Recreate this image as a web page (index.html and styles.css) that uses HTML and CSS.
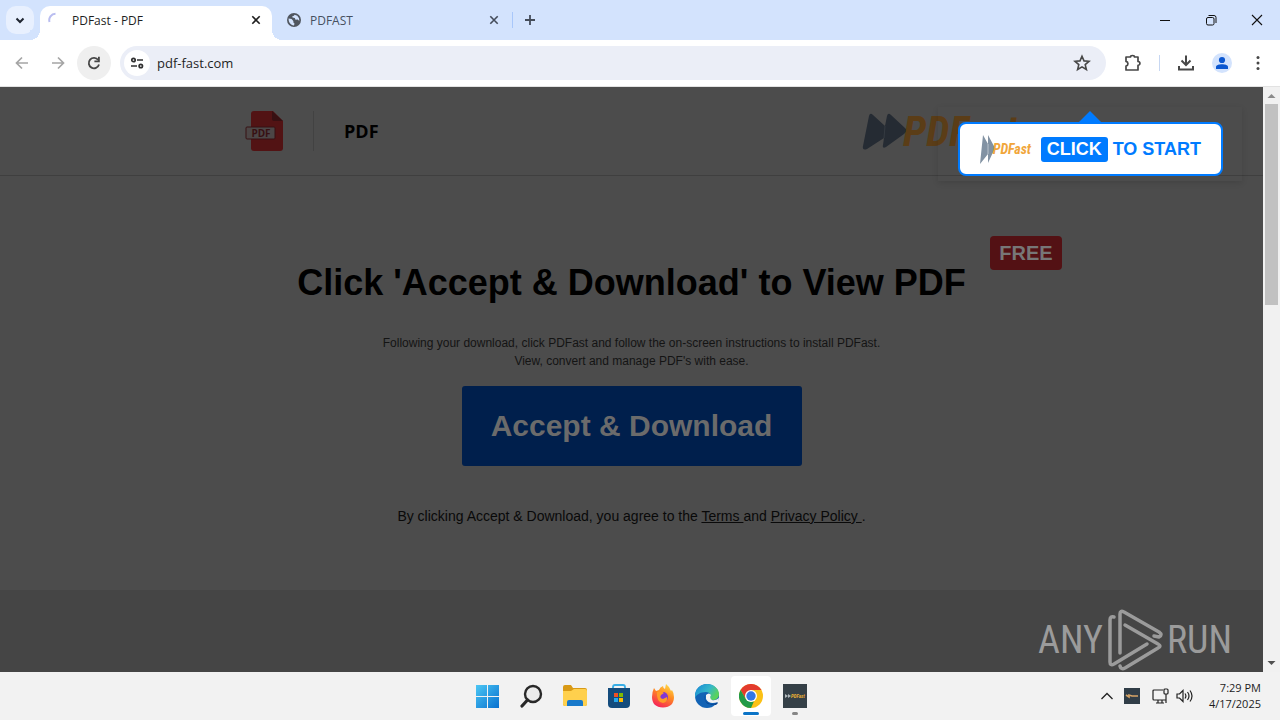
FILE: index.html
```html
<!DOCTYPE html>
<html lang="en">
<head>
<meta charset="utf-8">
<title>PDFast - PDF</title>
<link rel="stylesheet" href="styles.css">
</head>
<body>
<div class="tabstrip">
  <button class="tab-search" aria-label="Search tabs"><svg width="20" height="20" viewBox="0 0 20 20"><path d="M6.500 8.500l3.500 3.500 3.500-3.500" fill="none" stroke="#1f2530" stroke-width="2"/></svg></button>
  <div class="tab tab-active">
    <svg class="tab-icon" width="16" height="16" viewBox="0 0 16 16"><path d="M1.500 10a6.500 6.500 0 0 1 6-8.300" fill="none" stroke="#b9bdf0" stroke-width="2"/></svg>
    <span class="tab-title">PDFast - PDF</span>
    <button class="tab-close" aria-label="Close tab"><svg width="10" height="10" viewBox="0 0 10 10"><path d="M1.300 1.300l7.400 7.400M8.700 1.300l-7.400 7.400" stroke="#1f1f1f" stroke-width="1.600"/></svg></button>
  </div>
  <div class="tab tab-idle">
    <svg class="tab-icon" width="16" height="16" viewBox="0 0 16 16"><circle cx="8" cy="8" r="7" fill="#50565f"/><path d="M2.600 6.500l3 .5 1.700 2 .2 1.700 1 .7-.5 2C4.500 13 2.500 10.500 2.600 6.500zM8.500 2.700l2.800 1 1.700 2.500.3 2.800-1.600-1.500-2.200.2-.7-1.700-2.300-.6-.2-1.200 1.700-.4z" fill="#d3e3fd"/></svg>
    <span class="tab-title">PDFAST</span>
    <button class="tab-close" aria-label="Close tab"><svg width="10" height="10" viewBox="0 0 10 10"><path d="M1.300 1.300l7.400 7.400M8.700 1.300l-7.400 7.400" stroke="#444c5a" stroke-width="1.600"/></svg></button>
  </div>
  <span class="tab-divider"></span>
  <button class="new-tab" aria-label="New tab"><svg width="12" height="12" viewBox="0 0 12 12"><path d="M6 1v10M1 6h10" stroke="#444c5a" stroke-width="1.800"/></svg></button>
  <div class="window-controls">
    <button aria-label="Minimize"><svg width="12" height="12" viewBox="0 0 12 12"><path d="M1 6.500h10" stroke="#111"/></svg></button>
    <button aria-label="Restore"><svg width="12" height="12" viewBox="0 0 12 12"><rect x="1.500" y="3.500" width="7.500" height="7.500" rx="1.500" fill="none" stroke="#111"/><path d="M3.500 1.500h5.500a2 2 0 0 1 2 2v5.500" fill="none" stroke="#111"/></svg></button>
    <button aria-label="Close"><svg width="12" height="12" viewBox="0 0 12 12"><path d="M1 1l10 10M11 1L1 11" stroke="#111" stroke-width="1.100"/></svg></button>
  </div>
</div>

<div class="toolbar">
  <button class="nav-button" aria-label="Back"><svg width="16" height="16" viewBox="0 0 16 16"><path d="M14 8H3M8 2.500L2.500 8 8 13.500" fill="none" stroke="#a5a5a5" stroke-width="1.700"/></svg></button>
  <button class="nav-button" aria-label="Forward"><svg width="16" height="16" viewBox="0 0 16 16"><path d="M2 8h11M8 2.500L13.500 8 8 13.500" fill="none" stroke="#a5a5a5" stroke-width="1.700"/></svg></button>
  <button class="nav-button nav-reload" aria-label="Reload"><svg width="16" height="16" viewBox="0 0 16 16"><path d="M13 9.500A5.200 5.200 0 1 1 12.200 5" fill="none" stroke="#474747" stroke-width="1.800"/><path d="M13.800 1.800v5.400H8.400V5.500H12V1.800z" fill="#474747"/></svg></button>
  <div class="address-bar">
    <button class="site-info" aria-label="Site information"><svg width="16" height="16" viewBox="0 0 16 16"><g fill="none" stroke="#303030" stroke-width="1.700"><circle cx="4.500" cy="5" r="1.700"/><path d="M8 5h6M2 11h6"/><circle cx="11.800" cy="11" r="1.700"/></g></svg></button>
    <input class="address" type="text" aria-label="Address" value="pdf-fast.com">
    <button class="bookmark" aria-label="Bookmark this page"><svg width="18" height="18" viewBox="0 0 18 18"><path d="M9 2.300l2 4.600 5 .4-3.800 3.300 1.200 4.900L9 12.900l-4.400 2.600 1.200-4.900L2 7.300l5-.4z" fill="none" stroke="#474747" stroke-width="1.600"/></svg></button>
  </div>
  <div class="toolbar-actions">
    <button aria-label="Extensions"><svg width="20" height="20" viewBox="0 0 20 20"><path d="M3 4h4.500a2 1.500 0 0 1 4 0H15v4.500a1.800 1.800 0 0 1 0 3.800V17H3v-4c2.600-.6 2.600-4 0-4.600z" fill="none" stroke="#474747" stroke-width="1.700" stroke-linejoin="round"/></svg></button>
    <span class="toolbar-divider"></span>
    <button aria-label="Downloads"><svg width="20" height="20" viewBox="0 0 20 20"><path d="M10 2.500v9M5.500 7.500l4.500 4.500 4.500-4.500M3 13v3.500h14V13" fill="none" stroke="#474747" stroke-width="2"/></svg></button>
    <button aria-label="Profile"><svg width="20" height="20" viewBox="0 0 20 20"><circle cx="10" cy="10" r="10" fill="#d3e3fd"/><circle cx="10" cy="7" r="3.100" fill="#0b57d0"/><path d="M4 16v-2c0-2 3-2.800 6-2.800s6 .8 6 2.800v2z" fill="#0b57d0"/></svg></button>
    <button aria-label="Menu"><svg width="20" height="20" viewBox="0 0 20 20"><g fill="#474747"><circle cx="10" cy="4.500" r="1.500"/><circle cx="10" cy="10" r="1.500"/><circle cx="10" cy="15.500" r="1.500"/></g></svg></button>
  </div>
</div>

<div class="viewport">
  <div class="page">
    <header class="site-header">
      <div class="header-inner">
        <svg class="pdf-icon" width="39" height="42" viewBox="0 0 39 42" role="img" aria-label="PDF file"><path d="M9 1h19l10 10v27a3 3 0 0 1-3 3H9a3 3 0 0 1-3-3V4a3 3 0 0 1 3-3z" fill="#521314"/><path d="M27 1l11 10H29a2 2 0 0 1-2-2z" fill="#371012"/><rect x="1" y="17" width="29" height="12" rx="1" fill="#4c4646" stroke="#371012"/><text class="pdf-icon-text" x="16" y="27" text-anchor="middle">PDF</text></svg>
        <span class="product-name">PDF</span>
        <div class="logo logo-large">
          <svg width="46" height="38" viewBox="0 0 46 38"><path d="M7 4Q8 0 11 3L23 14 25 4Q26 0 29 3L43 16Q46 19 42 22L24 35Q20 37 21 33L22 26 5 37Q0 39 1 34z" fill="#252b33"/><path d="M23 14l-1 12" stroke="#343a41"/></svg>
          <span>PDFast</span>
        </div>
      </div>
    </header>
    <main class="hero">
      <div class="hero-inner">
        <span class="free-badge">FREE</span>
        <h1>Click 'Accept &amp; Download' to View PDF</h1>
        <p class="instructions">Following your download, click PDFast and follow the on-screen instructions to install PDFast.<br>View, convert and manage PDF's with ease.</p>
        <button class="download">Accept &amp; Download</button>
        <p class="terms">By clicking Accept &amp; Download, you agree to the <a href="#">Terms </a>and <a href="#">Privacy Policy </a>.</p>
      </div>
    </main>
    <footer class="site-footer"></footer>
  </div>
  <div class="scrollbar" aria-hidden="true">
    <svg width="17" height="17" viewBox="0 0 17 17"><path d="M4.500 11L8.500 7l4 4z" fill="#8b8b8b"/></svg>
    <div class="scroll-thumb"></div>
    <svg class="scroll-down" width="17" height="17" viewBox="0 0 17 17"><path d="M4.500 6L8.500 10l4-4z" fill="#505050"/></svg>
  </div>
  <div class="prompt-shade"></div>
  <div class="prompt">
    <div class="logo logo-small">
      <svg width="15" height="30" viewBox="0 0 15 30"><path d="M3 1L8 10V1l7 13-7 15v-9L0 30z" fill="#8292a3"/><path d="M8 10v10" stroke="#b9c3cc"/></svg>
      <span>PDFast</span>
    </div>
    <span class="prompt-click">CLICK</span>
    <span class="prompt-text">TO START</span>
  </div>
  <div class="watermark">
    <span>ANY</span>
    <svg width="56" height="64" viewBox="0 0 56 64"><g fill="none" stroke="#9b9b9b" stroke-width="3.500" stroke-linejoin="round" stroke-linecap="round"><path d="M7 9Q3 8 3 12V54Q3 58 7 56L40 36"/><path d="M13 45V6Q13 2 17 4L52 24Q56 27 52 29L47 28"/><path d="M18 17L51 36Q55 38 51 40L18 60Q14 62 13 58"/></g></svg>
    <span>RUN</span>
  </div>
</div>

<div class="taskbar">
  <nav class="apps" aria-label="Taskbar">
    <button aria-label="Start"><svg width="24" height="24" viewBox="0 0 24 24"><defs><linearGradient id="win" x1="0" y1="0" x2="1" y2="1"><stop offset="0" stop-color="#4cc7f4"/><stop offset="1" stop-color="#0870cf"/></linearGradient></defs><path d="M1 1h11v11H1zM13 1h11v11H13zM1 13h11v11H1zM13 13h11v11H13z" fill="url(#win)"/></svg></button>
    <button aria-label="Search"><svg width="24" height="24" viewBox="0 0 24 24"><circle cx="14" cy="10" r="8" fill="#ececec" stroke="#292929" stroke-width="2.400"/><path d="M8.500 16L3 22" stroke="#292929" stroke-width="3.200" stroke-linecap="round"/></svg></button>
    <button aria-label="File Explorer"><svg width="26" height="24" viewBox="0 0 26 24"><path d="M1 3q0-2 2-2h6l2 3h12q2 0 2 2v14q0 2-2 2H3q-2 0-2-2z" fill="#d99a16"/><path d="M1 7h8l3-2h11q2 0 2 2v13q0 2-2 2H3q-2 0-2-2z" fill="#ffd04d"/><path d="M5 22v-4q0-2 2-2h12q2 0 2 2v4z" fill="#1879ca"/></svg></button>
    <button aria-label="Microsoft Store"><svg width="24" height="24" viewBox="0 0 24 24"><path d="M6 5V3q0-2 2-2h8q2 0 2 2v2" fill="none" stroke="#38aee6" stroke-width="1.800"/><path d="M1 4h22v16q0 4-4 4H5q-4 0-4-4z" fill="#144c7d"/><path d="M7 9h4v4H7z" fill="#f25022"/><path d="M12 9h4v4h-4z" fill="#7fba00"/><path d="M7 14h4v4H7z" fill="#26a8ec"/><path d="M12 14h4v4h-4z" fill="#ffb900"/></svg></button>
    <button aria-label="Firefox"><svg width="24" height="24" viewBox="0 0 24 24"><defs><linearGradient id="fox" x1=".8" y1="0" x2=".3" y2="1"><stop offset="0" stop-color="#ffe048"/><stop offset=".45" stop-color="#ff8a22"/><stop offset="1" stop-color="#f52259"/></linearGradient></defs><path d="M3 4l2 3 3-1q1-3 4-4 0 2 2 3l1-5q4 3 5 7l1-1q2 3 2 7 0 10-11 10.500Q1 23 1 13 1 8 3 4z" fill="url(#fox)"/><circle cx="12" cy="13" r="5" fill="#8137d5"/><path d="M6 8q4-2 7 1l-3 2q-2 3 2 4l4-2q1 5-4 6-7-1-6-11z" fill="#ff9b28"/></svg></button>
    <button aria-label="Microsoft Edge"><svg width="24" height="24" viewBox="0 0 24 24"><defs><linearGradient id="edge" x1="0" y1="0" x2="1" y2=".5"><stop offset="0" stop-color="#1588d9"/><stop offset=".6" stop-color="#35b7c9"/><stop offset="1" stop-color="#5bd35b"/></linearGradient></defs><circle cx="12" cy="12" r="12" fill="#1263b5"/><path d="M0 12C0 5 5 0 12 0s12 5 12 10c0 4-3 6-6 6s-4-1-3-3 0-5-4-5C5 8 1 11 0 14z" fill="url(#edge)"/><path d="M11 10c-3 4 0 10 6 10 3 0 4-1 5-2l1 1-2 2c-3-1-8 1-10-3-2-3-2-6 0-8z" fill="#0b458f"/><path d="M11 11q3-3 5 0-2 3 1 5 3 1 7-2l-1 4q-9 3-12-3z" fill="#f2f2f2"/></svg></button>
    <button class="app-active" aria-label="Google Chrome"><svg width="24" height="24" viewBox="0 0 24 24"><circle cx="12" cy="12" r="12" fill="#fbc116"/><path d="M1.600 6A12 12 0 0 1 22.400 6H12L6.800 15z" fill="#e33b2e"/><path d="M1.600 6L6.800 15l5.200 3 3-.8L12 24A12 12 0 0 1 1.600 6z" fill="#229a48"/><circle cx="12" cy="12" r="6" fill="#fff"/><circle cx="12" cy="12" r="4.700" fill="#3277e6"/></svg></button>
    <button class="app-open" aria-label="PDFast"><svg width="24" height="24" viewBox="0 0 24 24"><path d="M0 0h24v24H0z" fill="#354047"/><path d="M2 10l3 2v-2l3 2-3 2v-2l-3 2z" fill="#b0b8bb"/><text class="app-logo-text" x="8" y="14">PDFast</text></svg></button>
  </nav>
  <div class="tray">
    <button aria-label="Show hidden icons"><svg width="14" height="10" viewBox="0 0 14 10"><path d="M1.500 8L7 2.500 12.500 8" fill="none" stroke="#222" stroke-width="1.300"/></svg></button>
    <svg class="tray-app" width="16" height="16" viewBox="0 0 16 16"><path d="M0 0h16v16H0z" fill="#303d47"/><path d="M2 7l3 2V7l3 1h6" fill="none" stroke="#d6a467" stroke-width="1.600"/></svg>
    <svg class="tray-network" width="17" height="16" viewBox="0 0 17 16"><g fill="none" stroke="#222" stroke-width="1.200"><path d="M11 2H2Q1 2 1 3v8q0 1 1 1h12V6M4 15h8M6 12v3M10 12v3M14 12v3"/><rect x="12" y="1" width="4" height="5" rx="1"/></g></svg>
    <svg class="tray-sound" width="17" height="16" viewBox="0 0 17 16"><g fill="none" stroke="#222" stroke-width="1.200"><path d="M1 6h2.500L7 2.500v11L3.500 10H1zM9 5.500q1.800 2.500 0 5M11.500 4q3 4 0 8M14 2.500q4 5.500 0 11"/></g></svg>
    <div class="clock"><time>7:29 PM</time><time>4/17/2025</time></div>
  </div>
</div>
</body>
</html>
```
FILE: styles.css
```css
* { box-sizing: border-box; }

body {
  margin: 0;
  height: 100vh;
  display: flex;
  flex-direction: column;
  overflow: hidden;
  background: #f2f2f2;
  font-family: "Liberation Sans", Arial, sans-serif;
}

button {
  display: flex;
  align-items: center;
  justify-content: center;
  flex: none;
  margin: 0;
  padding: 0;
  border: 0;
  background: none;
}

svg { display: block; flex: none; }

.tabstrip {
  display: flex;
  flex: none;
  height: 40px;
  padding-left: 6px;
  background: #d3e3fd;
  font-family: "Open Sans", "Noto Sans", sans-serif;
  font-size: 12px;
}

.tab-search {
  width: 28px;
  height: 28px;
  margin: 6px 6px 0 0;
  border-radius: 10px;
  background: #e8f0fe;
}

.tab {
  display: flex;
  align-items: center;
  flex: 0 1 232px;
  height: 34px;
  margin-top: 6px;
  padding: 0 8px 6px;
}

.tab-active {
  position: relative;
  border-radius: 10px 10px 0 0;
  background: #fff;
  color: #1f1f1f;
}

.tab-active::before,
.tab-active::after {
  content: "";
  position: absolute;
  bottom: 0;
  width: 10px;
  height: 10px;
}

.tab-active::before {
  right: 100%;
  background: radial-gradient(circle at 0 0, #d3e3fd 10px, #fff 10px);
}

.tab-active::after {
  left: 100%;
  background: radial-gradient(circle at 100% 0, #d3e3fd 10px, #fff 10px);
}

.tab-idle { flex-basis: 240px; padding-left: 14px; color: #46505f; }
.tab-title { flex: 1; margin-left: 8px; }
.tab-close { width: 16px; height: 16px; }
.tab-idle .tab-close { margin-right: 2px; }
.tab-divider { width: 1px; height: 16px; margin-top: 12px; background: #a8c7fa; }
.new-tab { width: 34px; height: 40px; }
.window-controls { display: flex; margin-left: auto; }
.window-controls button { width: 46px; }

.toolbar {
  display: flex;
  flex: none;
  align-items: center;
  height: 47px;
  padding: 0 12px 1px 5px;
  border-bottom: 1px solid #e2e2e2;
  background: #fff;
}

.nav-button { width: 34px; height: 34px; margin-right: 2px; border-radius: 50%; }
.nav-reload { margin-right: 9px; background: #efefef; }

.address-bar {
  display: flex;
  flex: 1;
  align-items: center;
  height: 34px;
  padding: 0 15px 0 4px;
  border-radius: 17px;
  background: #ebeef7;
}

.site-info { width: 26px; height: 26px; border-radius: 50%; background: #fff; }

.address {
  flex: 1;
  min-width: 0;
  margin-left: 7px;
  padding: 0;
  border: 0;
  outline: 0;
  background: none;
  color: #1f1f1f;
  font: 13px "Open Sans", "Noto Sans", sans-serif;
}

.toolbar-actions { display: flex; align-items: center; gap: 16px; margin-left: 17px; }
.toolbar-divider { width: 1px; height: 16px; background: #c7d7f2; }

.viewport { position: relative; display: flex; flex: 1; min-height: 0; }

.page {
  display: flex;
  flex: 1;
  flex-direction: column;
  min-width: 0;
  background: #4c4c4c;
  color: #000;
}

.site-header { border-bottom: 1px solid #3f3f3f; }

.header-inner {
  display: flex;
  align-items: center;
  max-width: 773px;
  height: 88px;
  margin: 0 auto;
}

.pdf-icon-text {
  fill: #371012;
  font: bold 10px "Open Sans", sans-serif;
}

.product-name {
  margin-left: 29px;
  padding-left: 30px;
  border-left: 1px solid #424242;
  font: bold 18px/40px "Open Sans", "Noto Sans", sans-serif;
}

.logo {
  display: flex;
  align-items: center;
  font-family: "Liberation Sans Narrow", "Roboto Condensed", "Open Sans Condensed", "DejaVu Sans Condensed", sans-serif;
  font-style: italic;
  font-weight: bold;
}

.logo-large { width: 156px; margin-left: auto; color: #5b3d17; font-size: 42px; }
.logo-large span { margin-left: -5px; }
.logo-small { width: 51px; color: #f1a63b; font-size: 14px; }
.logo-small span { margin-left: -2px; }

.hero { padding: 60px 0 64px; }

.hero-inner {
  position: relative;
  display: flex;
  flex-direction: column;
  align-items: center;
  max-width: 861px;
  margin: 0 auto;
  padding-top: 24px;
  text-align: center;
}

.free-badge {
  position: absolute;
  top: 0;
  right: 0;
  min-width: 72px;
  padding: 0 9px;
  border-radius: 4px;
  background: #531114;
  color: #777;
  font: bold 20px/34px "Liberation Sans", Arial, sans-serif;
}

h1 { margin: 0; font-size: 36px; line-height: 46px; }
.instructions { margin: 28px 0 16px; color: #141414; font-size: 12px; line-height: 18px; }

.download {
  min-width: 340px;
  height: 80px;
  border-radius: 3px;
  background: #001f4c;
  color: #6b6b6b;
  font: bold 30px "Liberation Sans", Arial, sans-serif;
}

.terms { margin: 40px 0 0; color: #090909; font-size: 14px; line-height: 20px; }
.terms a { color: inherit; }
.site-footer { flex: 1; background: #454545; }

.scrollbar {
  display: flex;
  flex: none;
  flex-direction: column;
  width: 17px;
  background: #f1f1f1;
}

.scroll-thumb { height: 201px; margin: 0 2px; background: #c1c1c1; }
.scroll-down { margin-top: auto; }

.prompt-shade {
  position: absolute;
  top: 20px;
  right: 38px;
  width: 304px;
  height: 74px;
  box-shadow: 0 2px 6px rgba(0, 0, 0, 0.12);
}

.prompt {
  position: absolute;
  top: 35px;
  right: 57px;
  display: flex;
  align-items: center;
  height: 54px;
  padding: 0 20px;
  border: 2px solid #007bff;
  border-radius: 8px;
  background: #fff;
  color: #007bff;
  font-size: 18px;
  font-weight: bold;
}

.prompt::before {
  content: "";
  position: absolute;
  bottom: 100%;
  left: 50%;
  margin-left: -13px;
  border: solid transparent;
  border-width: 0 13px 13px;
  border-bottom-color: #007bff;
}

.prompt-click {
  margin: 0 5px 0 10px;
  padding: 0 6px;
  border-radius: 3px;
  background: #007bff;
  color: #fff;
  line-height: 25px;
}

.watermark {
  position: absolute;
  right: 48px;
  bottom: 0;
  display: flex;
  align-items: center;
  gap: 4px;
  color: #9b9b9b;
  font: 400 38px "Roboto Condensed", "Liberation Sans Narrow", "Open Sans Condensed", sans-serif;
}

.taskbar {
  display: grid;
  flex: none;
  grid-template-columns: 1fr auto 1fr;
  height: 48px;
  padding-left: 2px;
  background: #f2f2f2;
}

.apps { grid-column: 2; display: flex; align-items: center; gap: 4px; }
.apps button { position: relative; width: 40px; height: 40px; border-radius: 4px; }
.apps .app-active { background: #fff; }

.app-active::after,
.app-open::after {
  content: "";
  position: absolute;
  bottom: 1px;
  width: 16px;
  height: 3px;
  border-radius: 2px;
  background: #0b74c7;
}

.app-open::after { width: 6px; background: #858585; }

.app-logo-text {
  fill: #e8ae34;
  font: italic bold 5px "Liberation Sans Narrow", "Roboto Condensed", "Liberation Sans", sans-serif;
}

.tray {
  display: flex;
  align-items: center;
  justify-content: flex-end;
  padding-right: 19px;
  color: #1c1c1c;
}

.tray-app { margin-left: 10px; }
.tray-network { margin-left: 12px; }
.tray-sound { margin-left: 7px; }

.clock {
  display: flex;
  flex-direction: column;
  align-items: flex-end;
  min-width: 68px;
  font: 11px/16px "Open Sans", "Noto Sans", sans-serif;
}
```
